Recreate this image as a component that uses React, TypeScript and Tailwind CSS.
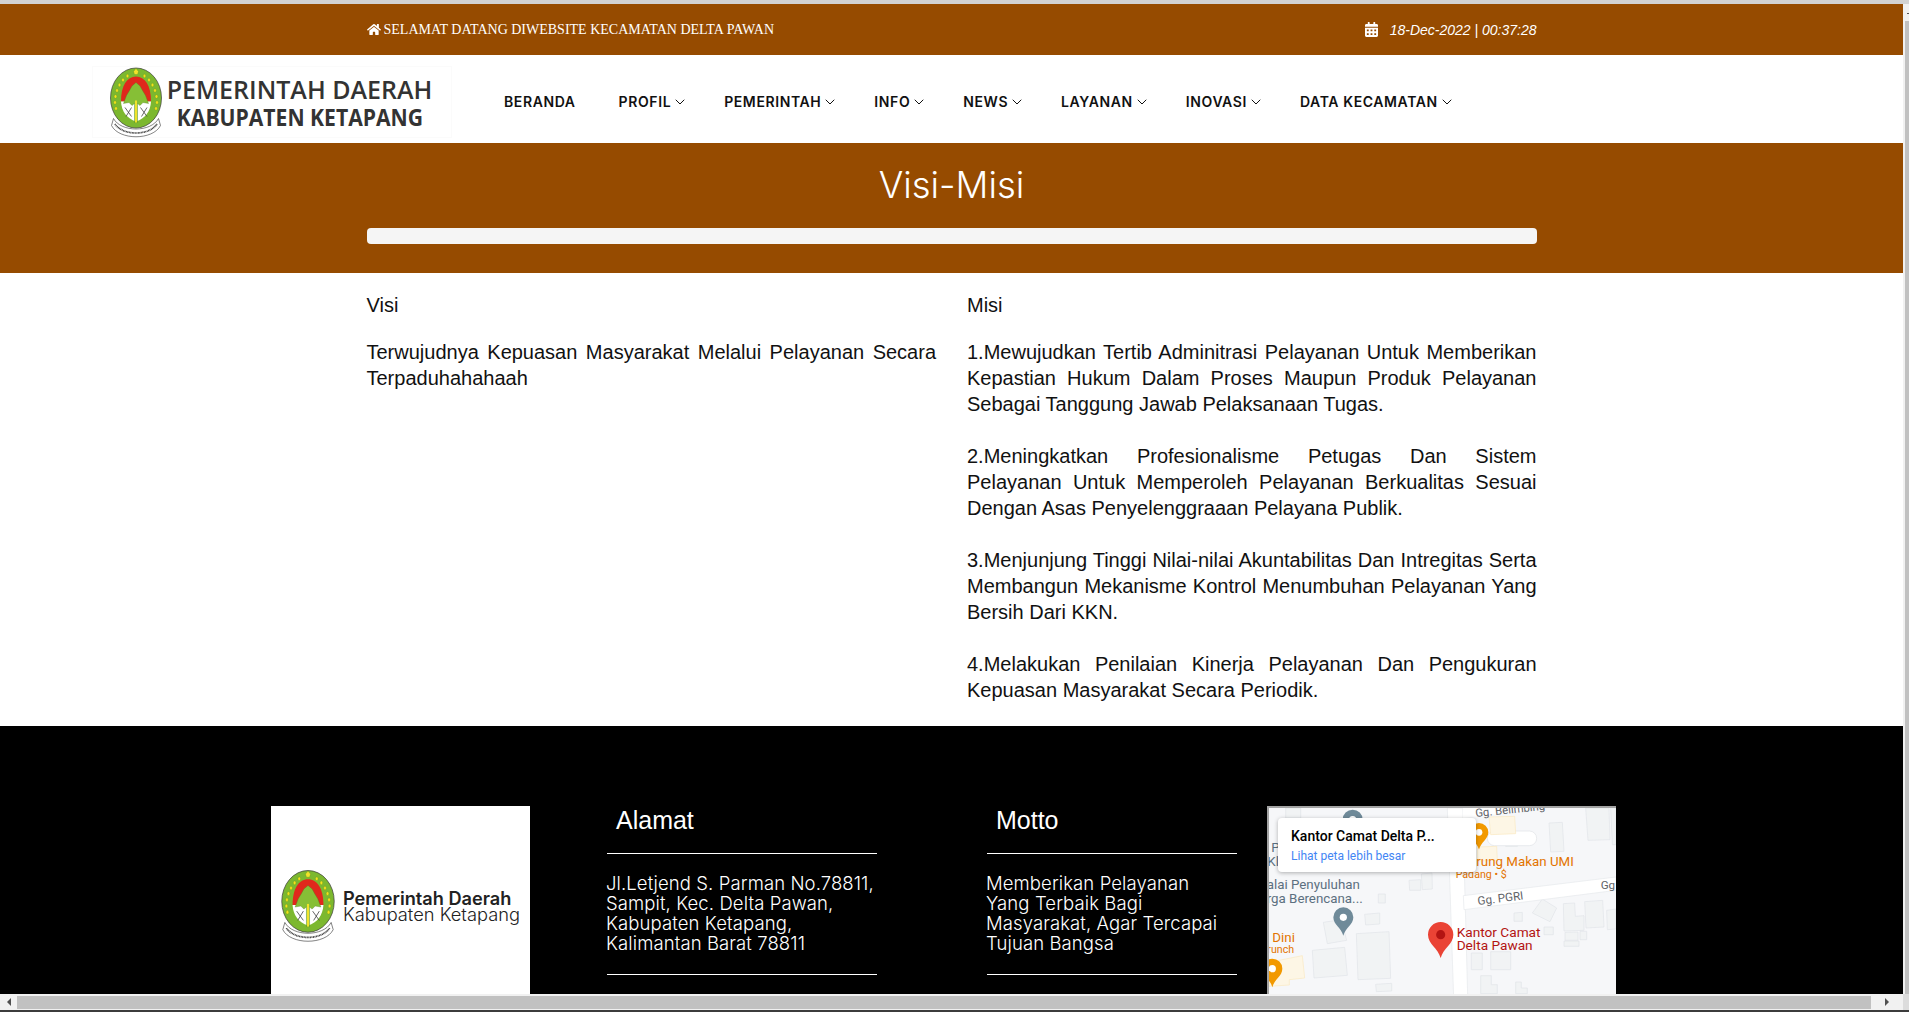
import React from 'react';
import { ChevronDown } from 'lucide-react';
import { FaHome, FaCalendarAlt } from 'react-icons/fa';

const navItems = [
  { label: 'BERANDA', caret: false },
  { label: 'PROFIL', caret: true },
  { label: 'PEMERINTAH', caret: true },
  { label: 'INFO', caret: true },
  { label: 'NEWS', caret: true },
  { label: 'LAYANAN', caret: true },
  { label: 'INOVASI', caret: true },
  { label: 'DATA KECAMATAN', caret: true },
];

const misi = [
  '1.Mewujudkan Tertib Adminitrasi Pelayanan Untuk Memberikan Kepastian Hukum Dalam Proses Maupun Produk Pelayanan Sebagai Tanggung Jawab Pelaksanaan Tugas.',
  '2.Meningkatkan Profesionalisme Petugas Dan Sistem Pelayanan Untuk Memperoleh Pelayanan Berkualitas Sesuai Dengan Asas Penyelenggraaan Pelayana Publik.',
  '3.Menjunjung Tinggi Nilai-nilai Akuntabilitas Dan Intregitas Serta Membangun Mekanisme Kontrol Menumbuhan Pelayanan Yang Bersih Dari KKN.',
  '4.Melakukan Penilaian Kinerja Pelayanan Dan Pengukuran Kepuasan Masyarakat Secara Periodik.',
];

const ricePoints = [
  [12, 82], [10, 70], [11, 58], [14, 46], [19, 35], [26, 25], [35, 17],
  [92, 82], [94, 70], [93, 58], [90, 46], [85, 35], [78, 25], [69, 17],
];

function Emblem({ className }: { className: string }) {
  return (
    <svg viewBox="0 0 104 140" className={className}>
      <ellipse cx="52" cy="61" rx="51" ry="60" fill="#7cb82f" stroke="#3c3c3c" strokeWidth="1.4" />
      <path d="M22 68C22 36 34 18 52 18C70 18 82 36 82 68Z" fill="#e0281c" />
      <path d="M22 68H82C81 88 70 102 52 108C34 102 23 88 22 68Z" fill="#fff" />
      {ricePoints.map(([x, y], i) => (
        <ellipse key={i} cx={x} cy={y} rx="2.6" ry="3.6" fill="#f3e21b" stroke="#55851c" strokeWidth="0.5" />
      ))}
      <path d="M52 30L60 37L65 46L71 56L77 72L66 70L60 76L55 72V110H49V72L44 76L38 70L27 72L33 56L39 46L44 37Z" fill="#86bf36" stroke="#4d7f1c" strokeWidth="0.7" />
      <rect x="50" y="66" width="4" height="44" fill="#f1e32a" />
      <path d="M30 80L43 98M43 80L32 98M61 80L74 98M74 80L63 98" stroke="#444" strokeWidth="1.6" fill="none" />
      <path d="M47 8L52 2L57 8L55 14H49Z" fill="#f1e32a" stroke="#55851c" strokeWidth="0.6" />
      <path d="M7 102C22 130 82 130 97 102L101 116C86 146 18 146 3 116Z" fill="#fff" stroke="#333" strokeWidth="1.2" />
      <path d="M10 113C26 137 78 137 94 113" stroke="#444" strokeWidth="3.4" strokeDasharray="2 1" fill="none" />
    </svg>
  );
}

function Pin({ x, y, r, fill, dot }: { x: number; y: number; r: number; fill: string; dot: string }) {
  const tip = y + r * 1.85;
  return (
    <g>
      <path d={`M${x} ${tip}C${x - r * 0.2} ${tip - r * 0.8} ${x - r} ${y + r * 0.75} ${x - r} ${y}A${r} ${r} 0 1 1 ${x + r} ${y}C${x + r} ${y + r * 0.75} ${x + r * 0.2} ${tip - r * 0.8} ${x} ${tip}Z`} fill={fill} />
      <circle cx={x} cy={y} r={r * 0.36} fill={dot} />
    </g>
  );
}

const buildings = [
  '965,15 1035,15 1038,110 972,112',
  '855,60 895,58 900,145 860,147',
  '1040,15 1056,15 1056,125 1045,125',
  '435,232 470,230 470,262 437,262',
  '472,213 504,210 505,258 475,260',
  '343,273 364,273 364,300 343,300',
  '178,358 232,350 248,412 190,422',
  '302,334 347,330 347,363 305,366',
  '277,392 375,386 380,526 282,530',
  '145,442 242,433 250,517 150,525',
  '750,330 775,328 775,355 750,355',
  '835,288 878,315 858,356 805,330',
  '898,302 932,300 934,340 960,338 960,382 900,384',
  '962,296 1016,292 1020,372 966,375',
  '1028,322 1056,318 1056,378 1030,380',
  '903,388 942,387 942,412 903,412',
  '948,385 968,385 968,410 948,410',
  '900,414 945,414 945,430 900,430',
  '840,372 868,372 868,395 840,395',
  '622,450 655,450 655,500 622,500',
  '680,446 740,446 740,500 680,500',
  '650,518 682,518 682,545 700,545 700,572 650,572',
  '755,537 772,537 772,555 790,555 790,572 755,572',
  '335,544 383,541 383,564 337,566',
  '725,116 760,114 760,130 725,130',
  '65,15 110,15 110,45 65,45',
];

function MapDrawing() {
  return (
    <svg viewBox="15 15 1041 600" className="block h-[200px] w-[347px] bg-[#f6f7f9]">
      {buildings.map((p) => (
        <polygon key={p} points={p} fill="#f1f3f4" stroke="#e1e4e8" strokeWidth="2" />
      ))}
      <polygon points="550,15 596,15 612,615 570,615" fill="#fff" stroke="#e6e8eb" strokeWidth="2" />
      <polygon points="596,45 780,24 800,15 596,15" fill="#fff" />
      <polygon points="598,278 1056,222 1056,262 600,320" fill="#fff" stroke="#e6e8eb" strokeWidth="2" />
      <rect x="670" y="84" width="148" height="44" rx="22" fill="#fff" stroke="#dfe2e6" strokeWidth="2" />
      <polygon points="675,42 752,40 755,92 680,95" fill="#fdf6e5" stroke="#fbe9c0" strokeWidth="2" />
      <polygon points="640,132 698,130 700,172 640,174" fill="#fdf6e5" stroke="#fbe9c0" strokeWidth="2" />
      <polygon points="15,478 115,458 122,525 76,530 76,546 15,550" fill="#fdf6e5" stroke="#fbe9c0" strokeWidth="2" />

      <Pin x={266} y={50} r={30} fill="#6f8a99" dot="#fff" />
      <Pin x={238} y={343} r={30} fill="#6f8a99" dot="#fff" />
      <Pin x={530} y={395} r={38} fill="#ea4335" dot="#b31412" />
      <Pin x={645} y={88} r={28} fill="#f29900" dot="#fff" />
      <Pin x={25} y={497} r={30} fill="#f29900" dot="#fff" />

      <g fontFamily="Roboto, sans-serif">
        <text x="635" y="42" fontSize="34" fill="#5f6368" transform="rotate(-6 635 42)">Gg. Belimbing</text>
        <text x="642" y="306" fontSize="35" fill="#5f6368" transform="rotate(-7 642 306)">Gg. PGRI</text>
        <text x="1010" y="258" fontSize="35" fill="#5f6368">Gg</text>
        <text x="637" y="188" fontSize="40" fill="#e37400">rung Makan UMI</text>
        <text x="575" y="224" fontSize="32" fill="#e37400">Padang • $</text>
        <text x="22" y="146" fontSize="40" fill="#5c7080">P</text>
        <text x="10" y="190" fontSize="40" fill="#5c7080">Kl</text>
        <text x="8" y="257" fontSize="40" fill="#5c7080">alai Penyuluhan</text>
        <text x="8" y="299" fontSize="40" fill="#5c7080">rga Berencana...</text>
        <text x="25" y="418" fontSize="40" fill="#e37400">Dini</text>
        <text x="10" y="450" fontSize="32" fill="#e37400">runch</text>
        <text x="578" y="401" fontSize="41" fill="#b31412">Kantor Camat</text>
        <text x="578" y="442" fontSize="41" fill="#b31412">Delta Pawan</text>
      </g>
    </svg>
  );
}

function FooterColumn({ title, lines, className }: { title: string; lines: string[]; className: string }) {
  return (
    <div className={className}>
      <h4 className="h-[47px] pl-[9px] font-['Liberation_Sans'] text-[25px] leading-[28px] text-white">{title}</h4>
      <div className="h-px bg-white" />
      <div className="-ml-px pb-[21px] pt-[19px] font-['Inter'] text-[18.5px] font-light leading-[20px] tracking-[0.1px] whitespace-nowrap text-white">
        {lines.map((l) => (
          <div key={l}>{l}</div>
        ))}
      </div>
      <div className="h-px bg-white" />
    </div>
  );
}

export default function App() {
  return (
    <div className="flex h-[1012px] w-[1909px] flex-col overflow-hidden bg-white">
      <div className="h-[4px] shrink-0 bg-[#d2d2d2]" />

      <div className="flex min-h-0 flex-1">
        <main className="flex w-[1903px] flex-col">
          {/* Top bar */}
          <div className="h-[51px] shrink-0 bg-[#964b00]">
            <div className="mx-auto flex h-full w-[1170px] items-center justify-between text-white">
              <div className="flex items-center gap-[3px] font-['Liberation_Serif'] text-sm">
                <FaHome className="h-[13px] w-[14px]" />
                <span>SELAMAT DATANG DIWEBSITE KECAMATAN DELTA PAWAN</span>
              </div>
              <div className="flex items-center gap-[12px] font-['Liberation_Sans'] text-sm italic">
                <FaCalendarAlt className="h-[15px] w-[13px]" />
                <span>18-Dec-2022 | 00:37:28</span>
              </div>
            </div>
          </div>

          {/* Navbar */}
          <nav className="flex h-[88px] shrink-0 items-center pl-[92px]">
            <div className="mt-[6px] flex h-[72px] w-[360px] items-center border border-[#fbfbfb] pl-[17px]">
              <Emblem className="h-[71px] w-[52px] shrink-0" />
              <div className="ml-[5px] flex w-[265px] flex-col items-center whitespace-nowrap pt-[1px] font-['Open_Sans'] text-[#333]">
                <span className="text-[25px] font-semibold leading-[28px]">PEMERINTAH DAERAH</span>
                <span className="scale-x-[0.88] text-[24px] font-bold leading-[28px]">KABUPATEN KETAPANG</span>
              </div>
            </div>
            <ul className="ml-[52px] flex items-center gap-10 pt-[5px] font-['Inter'] text-[14px] font-semibold text-[#111]">
              {navItems.map((n) => (
                <li key={n.label} className="flex items-center gap-[1px] tracking-[0.6px] first:mr-[3px]">
                  {n.label}
                  {n.caret && <ChevronDown className="-mr-[4px] h-[16px] w-[16px]" strokeWidth={1.5} />}
                </li>
              ))}
            </ul>
          </nav>

          {/* Banner */}
          <div className="h-[130px] shrink-0 bg-[#964b00] pt-[17px]">
            <div className="mx-auto w-[1170px]">
              <h1 className="h-[68px] text-center font-['Inter'] text-[36.5px] font-light leading-[50px] text-white">Visi-Misi</h1>
              <div className="h-[16px] rounded bg-[#f5f5f5]" />
            </div>
          </div>

          {/* Visi Misi */}
          <section className="h-[453px] shrink-0 pt-[19px] font-['Liberation_Sans'] text-[20px] leading-[26px] text-[#111]">
            <div className="mx-auto grid w-[1170px] grid-cols-2 gap-[31px]">
              <div>
                <p className="mb-[21px]">Visi</p>
                <p className="text-justify">Terwujudnya Kepuasan Masyarakat Melalui Pelayanan Secara Terpaduhahahaah</p>
              </div>
              <div>
                <p className="mb-[21px]">Misi</p>
                <div className="flex flex-col gap-[26px]">
                  {misi.map((m) => (
                    <p key={m} className="text-justify">{m}</p>
                  ))}
                </div>
              </div>
            </div>
          </section>

          {/* Footer */}
          <footer className="flex min-h-0 flex-1 items-start overflow-hidden bg-black pl-[271px] pt-[80px]">
            <div className="flex h-[200px] w-[259px] shrink-0 items-center bg-white pl-[10px]">
              <Emblem className="h-[72px] w-[54px] shrink-0" />
              <div className="ml-[8px] whitespace-nowrap font-['Inter'] leading-[16px] text-[#222]">
                <div className="text-[18.2px] font-semibold">Pemerintah Daerah</div>
                <div className="text-[18.3px] font-light">Kabupaten Ketapang</div>
              </div>
            </div>
            <FooterColumn
              title="Alamat"
              className="ml-[77px] w-[270px] shrink-0"
              lines={['Jl.Letjend S. Parman No.78811,', 'Sampit, Kec. Delta Pawan,', 'Kabupaten Ketapang,', 'Kalimantan Barat 78811']}
            />
            <FooterColumn
              title="Motto"
              className="ml-[110px] w-[250px] shrink-0"
              lines={['Memberikan Pelayanan', 'Yang Terbaik Bagi', 'Masyarakat, Agar Tercapai', 'Tujuan Bangsa']}
            />
            <div className="relative ml-[30px] h-[202px] w-[349px] shrink-0 border-l-2 border-t-2 border-[#a3a3a3]">
              <MapDrawing />
              <div className="absolute left-[9px] top-[10px] flex h-[54px] w-[198px] flex-col justify-center gap-[3px] rounded-sm bg-white pl-[13px] font-['Roboto'] shadow-[0_1px_4px_rgba(0,0,0,0.3)]">
                <div className="text-[14px] font-medium leading-[18px] text-black">Kantor Camat Delta P...</div>
                <div className="text-[12px] leading-[16px] text-[#4285f4]">Lihat peta lebih besar</div>
              </div>
            </div>
          </footer>
        </main>

        {/* Vertical scrollbar */}
        <div className="flex w-[6px] flex-col bg-[#f1f1f1]">
          <div className="flex h-[17px] justify-end pt-[9px]">
            <div className="h-px w-[2px] bg-[#505050]" />
          </div>
          <div className="ml-[2px] flex-1 bg-[#c1c1c1]" />
        </div>
      </div>

      {/* Horizontal scrollbar */}
      <div className="flex h-[16px] shrink-0 items-center bg-[#f1f1f1]">
        <div className="flex w-[17px] justify-center">
          <div className="h-0 w-0 border-y-[4px] border-r-[4px] border-y-transparent border-r-[#505050]" />
        </div>
        <div className="h-[13px] w-[1854px] bg-[#c1c1c1]" />
        <div className="flex w-[32px] justify-center">
          <div className="h-0 w-0 border-y-[4px] border-l-[4px] border-y-transparent border-l-[#505050]" />
        </div>
        <div className="h-full w-[6px] bg-[#dcdcdc]" />
      </div>
      <div className="h-[2px] shrink-0 bg-[#3c3c3c]" />
    </div>
  );
}
